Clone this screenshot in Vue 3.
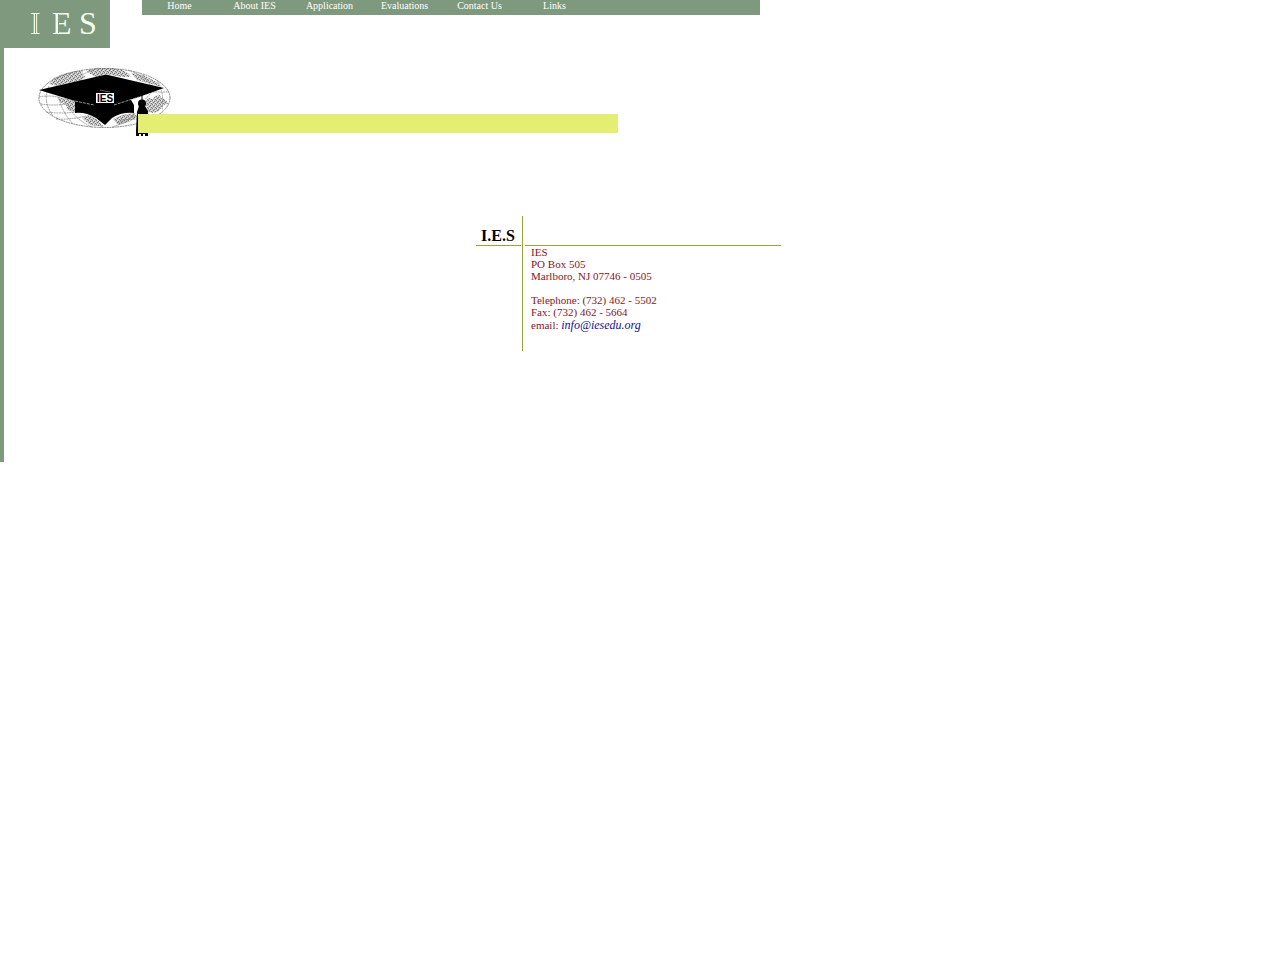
<script setup>
const links = ["Home", "About IES", "Application", "Evaluations", "Contact Us", "Links"];

const address = ["IES", "PO Box 505", "Marlboro, NJ 07746 - 0505"];
</script>

<template>
  <header class="header">
    <svg class="logo" viewBox="0 0 110 48" role="img" aria-label="IES">
      <g class="logo-letters">
        <text x="30" y="34">I</text>
        <text x="52" y="34">E</text>
        <text x="79" y="34">S</text>
      </g>
      <path d="M35.5 14V33M58.5 14V33" class="inline-cut" />
    </svg>
    <nav class="nav">
      <a v-for="link in links" :key="link" href="#">{{ link }}</a>
    </nav>
  </header>

  <main class="main">
    <div class="banner">
      <svg class="emblem" viewBox="38 67 134 71" aria-hidden="true">
        <defs>
          <pattern id="land" width="4" height="4" patternUnits="userSpaceOnUse">
            <rect width="4" height="4" fill="#c4c4c4" />
            <path d="M0 0h1v1h-1zM2 1h1v1h-1zM1 2h1v1h-1zM3 3h1v1h-1z" fill="#777" />
            <path d="M1 0h1v1h-1zM3 2h1v1h-1z" fill="#eee" />
          </pattern>
        </defs>
        <ellipse cx="104.500" cy="98" rx="65.500" ry="29.500" fill="#fff" />
        <g fill="url(#land)">
          <path d="M49 84L54 78L63 74L75 71L83 71L82 75L86 77L80 81L67 83L57 86Z" />
          <path d="M86 70L100 68H113L122 70L128 73L131 77L122 77L106 74L96 77L90 74Z" />
          <path d="M131 73L143 75L151 79L158 83L161 87L148 83L137 80Z" />
          <path d="M57 97L64 98L75 101V112L68 110L66 105L60 102Z" />
          <path d="M145 101L149 98L153 99L155 96L160 95L161 98L166 100L168 104L163 105L159 111L154 113L148 112Z" />
          <path d="M113 119L122 115L134 113L137 117L129 122L118 125Z" />
          <path d="M82 118L89 115L98 120L104 127L90 125Z" />
        </g>
        <g fill="none" stroke="#888" stroke-width=".8" stroke-dasharray="2 .6">
          <ellipse cx="104.500" cy="98" rx="65.500" ry="29.500" stroke="#666" />
          <path d="M39 97Q48 95 58 97M41 104Q52 106 67 104M46 112Q60 114 76 112M56 119Q70 120 86 116" />
          <path d="M121 120Q137 119 155 118M150 92H169M146 115H159" />
          <path d="M49 86Q42 101 53 116M59 86Q56 105 73 124M68 105Q74 119 92 127" />
          <path d="M82 75Q91 70 99 68M128 70Q145 76 150 85M134 113Q130 122 112 127" />
          <path d="M157 80Q165 94 162 110M154 87Q150 96 145 99M118 123L135 116" />
        </g>
        <path d="M75 101V113Q86 112 96 118L105 125L112 118Q121 112 134 113V105L131 100Z" />
        <path d="M39 90L106 74.500L164 88L139 97L114 105H96L75 101Z" />
        <path d="M75 101L94 105M114 105L139 97" stroke="#bbb" stroke-width=".8" stroke-dasharray="3 1" />
        <path d="M100 90L110 92" stroke="#888" stroke-width=".7" />
        <path d="M142 92V101" stroke="#000" />
        <circle cx="142" cy="103.500" r="4" />
        <path d="M139 106H145L148 111V136H145V134H143V136H141V134H139V136H136V131L137 112Z" />
        <rect x="96" y="93" width="18" height="10" fill="#fff" />
        <text x="105" y="102" class="cap-text">IES</text>
      </svg>
      <div class="bar"></div>
    </div>

    <section class="contact">
      <h1>I.E.S</h1>
      <div class="divider"></div>
      <div class="rule"></div>
      <address>
        <p v-for="line in address" :key="line">{{ line }}</p>
        <p class="phone">Telephone: (732) 462 - 5502</p>
        <p>Fax: (732) 462 - 5664</p>
        <p class="email">email: <a href="mailto:info@iesedu.org">info@iesedu.org</a></p>
      </address>
    </section>
  </main>
</template>

<style>
body {
  margin: 0;
  background: #fff;
  font-family: "Liberation Serif", "Times New Roman", serif;
}
</style>

<style scoped>
.header {
  display: flex;
  align-items: flex-start;
  gap: 32px;
}

.logo {
  width: 110px;
  height: 48px;
  flex: none;
  background: #7f997e;
}

.logo-letters {
  fill: #f4fff0;
  font-size: 32px;
}

.inline-cut {
  fill: none;
  stroke: #7f997e;
  stroke-width: 1;
}

.nav {
  display: flex;
  width: 618px;
  height: 15px;
  background: #7f997e;
}

.nav a {
  width: 75px;
  color: #fff;
  font-size: 10px;
  line-height: 12px;
  text-align: center;
  text-decoration: none;
}

.main {
  box-sizing: border-box;
  min-height: 414px;
  padding: 19px 27px 0 0;
  border-left: 4px solid #7f997e;
}

.banner {
  position: relative;
  padding-left: 34px;
}

.emblem {
  display: block;
  width: 134px;
  height: 71px;
}

.cap-text {
  font-family: "Liberation Sans", Arial, sans-serif;
  font-size: 10px;
  font-weight: bold;
  text-anchor: middle;
}

/* overlaps the tassel of the cap */
.bar {
  position: absolute;
  top: 47px;
  left: 134px;
  width: 480px;
  height: 19px;
  background: #e3ee73;
}

.contact {
  display: grid;
  grid-template-columns: 45px 4px 256px;
  grid-template-rows: 30px 105px;
  width: 305px;
  margin: 78px auto 0;
}

h1 {
  margin: 0;
  padding: 10px 0 0 5px;
  border-bottom: 1px solid #93a83a;
  font-size: 16px;
  line-height: 19px;
}

.divider {
  grid-row: span 2;
  width: 1px;
  margin-left: 1px;
  background: #93a83a;
}

.rule {
  border-bottom: 1px solid #93a83a;
}

address {
  grid-column: 3;
  padding-left: 6px;
  color: #851525;
  font-size: 11px;
  font-style: normal;
  line-height: 12px;
}

address p {
  margin: 0;
}

address .phone {
  margin-top: 12px;
}

address .email {
  line-height: 14px;
}

.email a {
  color: #10109a;
  font-size: 12px;
  font-style: italic;
  text-decoration: none;
}
</style>
